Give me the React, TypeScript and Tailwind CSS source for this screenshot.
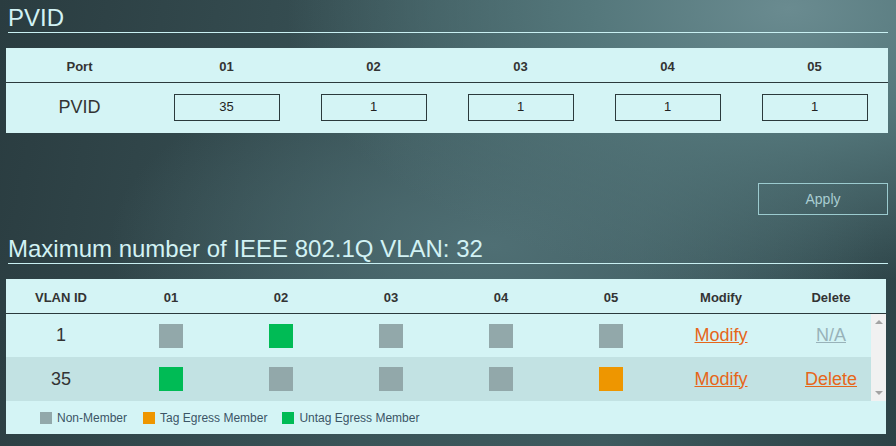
import React from "react";

const ports = ["01", "02", "03", "04", "05"];
const pvids = ["35", "1", "1", "1", "1"];

type Member = "n" | "t" | "u";

const vlans: { id: string; ports: Member[]; canDelete: boolean }[] = [
  { id: "1", ports: ["n", "u", "n", "n", "n"], canDelete: false },
  { id: "35", ports: ["u", "n", "n", "n", "t"], canDelete: true },
];

const memberColor: Record<Member, string> = {
  n: "bg-[#92a8aa]",
  t: "bg-[#ee9600]",
  u: "bg-[#00bb55]",
};

const SectionTitle = ({ children }: { children: React.ReactNode }) => (
  <div className="ml-[2px] h-[29px] border-b border-[#c9f0f2] text-[24px] leading-[28px] text-[#d2f2f4]">
    {children}
  </div>
);

const PvidTable = () => (
  <div className="mt-[15px] w-[882px] bg-[#d4f4f5]">
    <div className="grid h-[35px] grid-cols-6 items-center border-b border-[#2b3a3c] pt-[3px] text-[13px] font-bold text-[#333]">
      <div className="text-center">Port</div>
      {ports.map((p) => (
        <div key={p} className="text-center">
          {p}
        </div>
      ))}
    </div>
    <div className="grid h-[50px] grid-cols-6 items-center pb-[2px]">
      <div className="text-center text-[18px] text-[#333]">PVID</div>
      {pvids.map((v, i) => (
        <div key={i} className="flex justify-center">
          <div className="flex h-[27px] w-[106px] items-center justify-center border border-[#2b3a3c] text-[13px] text-[#222]">
            {v}
          </div>
        </div>
      ))}
    </div>
  </div>
);

const Scrollbar = () => (
  <div className="absolute right-0 top-0 flex h-full w-[15px] flex-col items-center justify-between bg-[#f1f1f1] py-[6px]">
    <div className="h-0 w-0 border-x-[4px] border-b-[4px] border-x-transparent border-b-[#a3a3a3]" />
    <div className="h-0 w-0 border-x-[4px] border-t-[4px] border-x-transparent border-t-[#a3a3a3]" />
  </div>
);

const VlanTable = () => (
  <div className="mt-[15px] w-[880px] bg-[#d4f4f5]">
    <div className="grid h-[35px] grid-cols-8 items-center border-b border-[#2b3a3c] pt-[3px] text-[13px] font-bold text-[#333]">
      <div className="text-center">VLAN ID</div>
      {ports.map((p) => (
        <div key={p} className="text-center">
          {p}
        </div>
      ))}
      <div className="text-center">Modify</div>
      <div className="text-center">Delete</div>
    </div>
    <div className="relative h-[87px] overflow-hidden">
      {vlans.map((v, r) => (
        <div
          key={v.id}
          className={`grid grid-cols-8 items-center ${r === 1 ? "h-[44px] bg-[#c2e2e3]" : "h-[43px]"}`}
        >
          <div className="text-center text-[18px] text-[#333]">{v.id}</div>
          {v.ports.map((m, i) => (
            <div key={i} className="flex justify-center">
              <div className={`h-[24px] w-[24px] ${memberColor[m]}`} />
            </div>
          ))}
          <div className="text-center text-[18px] text-[#e6661a] underline">Modify</div>
          <div
            className={`text-center text-[18px] underline ${v.canDelete ? "text-[#e6661a]" : "text-[#98b2b9]"}`}
          >
            {v.canDelete ? "Delete" : "N/A"}
          </div>
        </div>
      ))}
      <Scrollbar />
    </div>
    <div className="flex h-[33px] items-center pl-[34px] pt-[1px] text-[12px] text-[#3b5566]">
      <div className="h-[12px] w-[12px] bg-[#92a8aa]" />
      <span className="ml-[5px] mr-[16px]">Non-Member</span>
      <div className="h-[12px] w-[12px] bg-[#ee9600]" />
      <span className="ml-[5px] mr-[15px]">Tag Egress Member</span>
      <div className="h-[12px] w-[12px] bg-[#00bb55]" />
      <span className="ml-[5px]">Untag Egress Member</span>
    </div>
  </div>
);

export default function App() {
  return (
    <div className="h-[446px] w-[896px] overflow-hidden pl-[6px] pt-[4px] font-['Liberation_Sans',Arial,sans-serif] bg-[radial-gradient(ellipse_at_88%_2%,#6a8b90_0%,#54777b_18%,transparent_45%),radial-gradient(ellipse_at_55%_55%,#4f6f74_0%,transparent_55%),linear-gradient(100deg,#2a3c40_0%,#3a5458_45%,#3e5a5e_70%,#2c4246_100%)]">
      <div className="w-[882px]">
        <SectionTitle>PVID</SectionTitle>
      </div>
      <PvidTable />
      <div className="mt-[50px] flex w-[882px] justify-end">
        <button className="h-[32px] w-[130px] border border-[#9ccbcf] text-[14px] text-[#a9cdd1]">
          Apply
        </button>
      </div>
      <div className="mt-[20px] w-[882px]">
        <SectionTitle>Maximum number of IEEE 802.1Q VLAN: 32</SectionTitle>
      </div>
      <VlanTable />
    </div>
  );
}
